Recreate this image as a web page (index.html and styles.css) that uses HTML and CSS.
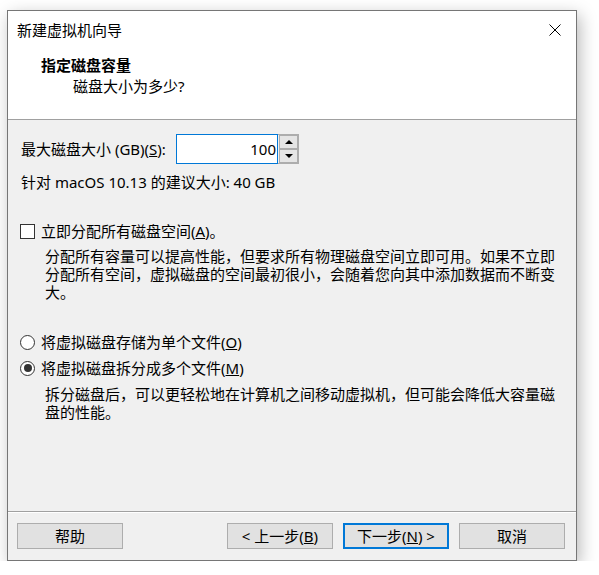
FILE: index.html
```html
<!DOCTYPE html>
<html>
<head>
  <title>新建虚拟机向导</title>
  <link rel="stylesheet" href="styles.css">
</head>
<body>
  <div class="dialog">
    <div class="header">
      <div class="titlebar">
        <span class="title">新建虚拟机向导</span>
        <svg class="close" width="12" height="12" viewBox="0 0 12 12">
          <path d="M0.5 0.5 L11.5 11.5 M11.5 0.5 L0.5 11.5" stroke="#000" stroke-width="1" fill="none"/>
        </svg>
      </div>
      <div class="heading">指定磁盘容量</div>
      <div class="subheading">磁盘大小为多少?</div>
    </div>

    <div class="content">
      <div class="size-row">
        <label class="size-label" for="size">最大磁盘大小 (GB)(<u>S</u>):</label>
        <div class="spin">
          <input type="text" id="size" class="size-input" value="100">
          <div class="spin-buttons">
            <div class="spin-btn"><span class="arrow-up"></span></div>
            <div class="spin-btn"><span class="arrow-down"></span></div>
          </div>
        </div>
      </div>
      <div class="hint">针对 macOS 10.13 的建议大小: 40 GB</div>

      <div class="option option-check">
        <span class="checkbox"></span>
        <span>立即分配所有磁盘空间(<u>A</u>)。</span>
      </div>
      <div class="desc">
        分配所有容量可以提高性能，但要求所有物理磁盘空间立即可用。如果不立即<br>
        分配所有空间，虚拟磁盘的空间最初很小，会随着您向其中添加数据而不断变<br>
        大。
      </div>

      <div class="option option-radio1">
        <span class="radio"></span>
        <span>将虚拟磁盘存储为单个文件(<u>O</u>)</span>
      </div>
      <div class="option option-radio2">
        <span class="radio checked"></span>
        <span>将虚拟磁盘拆分成多个文件(<u>M</u>)</span>
      </div>
      <div class="desc">
        拆分磁盘后，可以更轻松地在计算机之间移动虚拟机，但可能会降低大容量磁<br>
        盘的性能。
      </div>
    </div>

    <div class="footer">
      <button class="btn">帮助</button>
      <div class="spacer"></div>
      <button class="btn">&lt; 上一步(<u>B</u>)</button>
      <button class="btn btn-default">下一步(<u>N</u>) &gt;</button>
      <button class="btn">取消</button>
    </div>
  </div>
</body>
</html>
```

FILE: styles.css
```css
body {
  margin: 0;
  padding: 0;
  background-color: #FFFFFF;
  font-family: "Noto Sans", "Noto Sans CJK SC", sans-serif;
  font-size: 15px;
  line-height: 18px;
  color: #000000;
}

.dialog {
  width: 570px;
  height: 551px;
  margin: 10px 0 0 7px;
  box-sizing: border-box;
  border: 1px solid #767676;
  background-color: #F0F0F0;
  box-shadow: 3px 5px 16px rgba(0, 0, 0, 0.28);
  display: flex;
  flex-direction: column;
}

.header {
  background-color: #FFFFFF;
  height: 109px;
  box-sizing: border-box;
  border-bottom: 1px solid #A0A0A0;
  padding: 10px 0 0 9px;
}

.titlebar {
  display: flex;
  justify-content: space-between;
  align-items: center;
  padding-right: 15px;
}

.close {
  display: block;
}

.heading {
  font-weight: bold;
  margin: 17px 0 0 24px;
}

.subheading {
  margin: 3px 0 0 56px;
}

.content {
  flex: 1;
  padding: 14px 0 0 13px;
}

.size-row {
  display: flex;
  align-items: center;
  height: 30px;
}

.size-label {
  width: 155px;
}

.spin {
  display: flex;
}

.size-input {
  width: 102px;
  height: 30px;
  box-sizing: border-box;
  border: 1px solid #0078D7;
  padding: 0 1px 0 0;
  margin: 0;
  text-align: right;
  font-family: inherit;
  font-size: 15px;
  outline: none;
}

.spin-buttons {
  display: flex;
  flex-direction: column;
  width: 21px;
  height: 30px;
  box-sizing: border-box;
  border: 1px solid #ADADAD;
  border-left: none;
}

.spin-btn {
  flex: 1;
  background-color: #E5E5E5;
  border: 1px solid #ADADAD;
  margin: 0 0 0 1px;
  display: flex;
  align-items: center;
  justify-content: center;
}

.arrow-up {
  width: 0;
  height: 0;
  border-left: 4px solid transparent;
  border-right: 4px solid transparent;
  border-bottom: 4px solid #000000;
}

.arrow-down {
  width: 0;
  height: 0;
  border-left: 4px solid transparent;
  border-right: 4px solid transparent;
  border-top: 4px solid #000000;
}

.hint {
  margin-top: 9px;
}

.option {
  display: flex;
  align-items: center;
  margin-left: -1px;
}

.option-check {
  margin-top: 31px;
}

.option-radio1 {
  margin-top: 32px;
}

.option-radio2 {
  margin-top: 8px;
}

.checkbox {
  width: 15px;
  height: 15px;
  box-sizing: border-box;
  border: 1px solid #333333;
  background-color: #FFFFFF;
  margin-right: 6px;
}

.radio {
  width: 15px;
  height: 15px;
  box-sizing: border-box;
  border: 1px solid #333333;
  border-radius: 50%;
  background-color: #FFFFFF;
  margin-right: 6px;
  display: flex;
  align-items: center;
  justify-content: center;
}

.radio.checked::after {
  content: "";
  width: 8px;
  height: 8px;
  border-radius: 50%;
  background-color: #333333;
}

.desc {
  margin: 7px 0 0 24px;
  white-space: nowrap;
}

.option-radio2 + .desc {
  margin-top: 8px;
}

.footer {
  border-top: 1px solid #A0A0A0;
  box-shadow: inset 0 1px 0 #FFFFFF;
  padding: 11px 11px 11px 9px;
  display: flex;
  gap: 10px;
}

.spacer {
  flex: 1;
}

.btn {
  width: 106px;
  height: 26px;
  box-sizing: border-box;
  background-color: #E1E1E1;
  border: 1px solid #ADADAD;
  font-family: inherit;
  font-size: 15px;
  line-height: 18px;
  color: #000000;
  padding: 0;
}

.btn-default {
  border: 2px solid #0078D7;
}
```
